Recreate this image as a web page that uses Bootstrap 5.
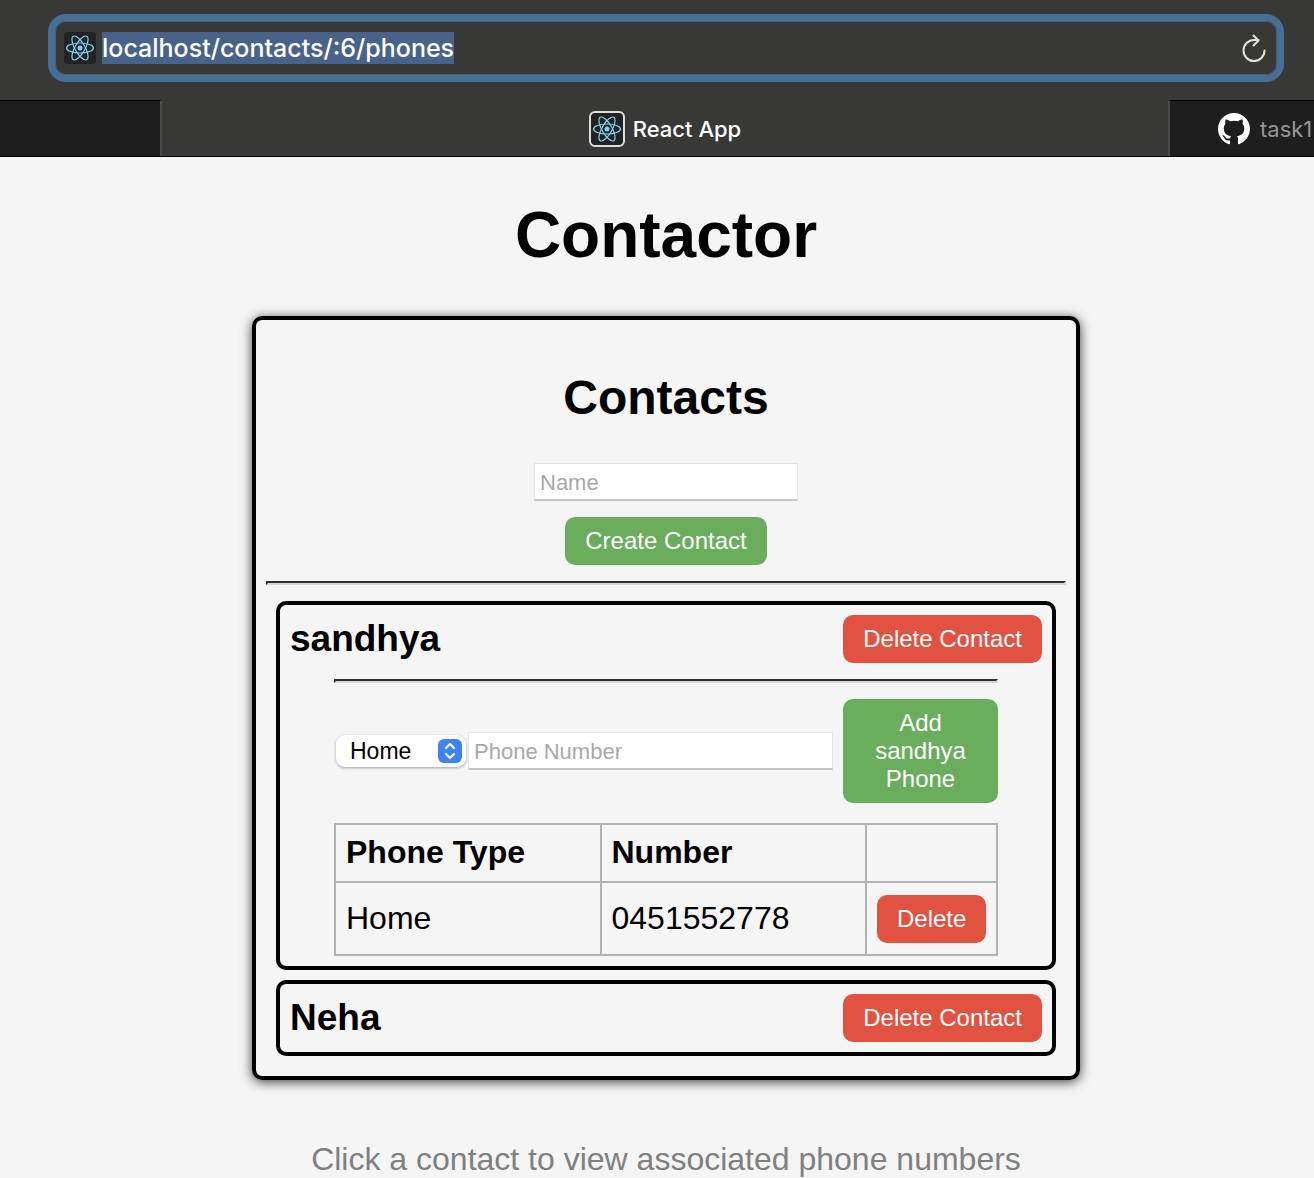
<!DOCTYPE html>
<html lang="en">
<head>
<meta charset="utf-8">
<meta name="viewport" content="width=device-width, initial-scale=1">
<title>React App</title>
<link href="https://cdn.jsdelivr.net/npm/bootstrap@5.3.0/dist/css/bootstrap.min.css" rel="stylesheet">
<style>
  body { font-family: "Liberation Sans", Arial, sans-serif; background: #f5f5f5; color: #000; font-size: 32px; line-height: 36px; overflow-x: hidden; }
  h1, h2, h3 { font-weight: 700; color: #000; }

  /* browser chrome */
  .chrome { background: #383836; font-family: Inter, "Open Sans", sans-serif; font-size: 22px; line-height: 32px; }
  .toolbar { padding: 14px 30px 18px 48px; }
  .address { height: 68px; border: 7px solid #466f98; border-radius: 18px; box-shadow: inset 0 0 0 1px #595957; padding: 0 9px; gap: 6px; }
  .address input { background: transparent; border: 0; outline: 0; color: #fff; font-size: 25px; font-weight: 500; line-height: 32px; height: 32px; padding: 0; min-width: 0; }
  .address input::selection { background: #48628a; color: #fff; }
  .reload { background: none; border: 0; padding: 0; width: 28px; height: 32px; }
  .tabs { height: 57px; border-bottom: 1px solid #000; }
  .tab-side { background: #1e1e1e; border-top: 1px solid #000; color: #969696; text-decoration: none; }
  .tab-first { width: 162px; border-right: 2px solid #4a4a49; }
  .tab-last { width: 146px; border-left: 2px solid #4a4a49; padding-left: 48px; gap: 10px; white-space: nowrap; overflow: hidden; }
  .tab-current { color: #fff; font-weight: 500; text-decoration: none; gap: 8px; padding-top: 2px; }

  /* application */
  .app { padding-left: 18px; }
  .app-title { font-size: 64px; line-height: 74px; margin: 41px 0 44px; }
  .panel { max-width: 828px; border: 4px solid #000; border-radius: 10px; padding: 10px 10px 20px; box-shadow: 0 2px 12px rgba(0,0,0,.75); }
  .panel-title { font-size: 48px; line-height: 55px; margin: 40px 0 38px; }
  .field { font-size: 22px; line-height: 26px; height: 38px; padding: 6px 4px 4px 5px; border: 1px solid #e6e6e6; border-bottom: 2px solid #c4c4c4; border-radius: 0; background: #fff; color: #000; min-width: 0; }
  .field::placeholder { color: #a9a9a9; opacity: 1; }
  .field-name { width: 264px; }
  .action { font-size: 24px; line-height: 28px; padding: 10px 20px; border: 0; border-radius: 10px; color: #fff; }
  .action-add { background: #69ad5d; }
  .action-remove { background: #e15241; }
  .rule { height: 4px; margin: 16px 0; opacity: 1; border: 2px solid; border-color: #2c302c #d4d6d4 #d4d6d4 #2c302c; }
  .people { gap: 10px; padding: 0 10px; }
  .person { border: 4px solid #000; border-radius: 10px; padding: 10px; }
  .person-name { font-size: 37px; line-height: 48px; }
  .phones { margin: 0 44px; }
  .kind { width: 130px; height: 32px; margin: 0 2px; }
  .kind select { display: block; appearance: none; width: 100%; height: 100%; border: 0; border-radius: 9px; background: #fff; color: #000; font-size: 23px; line-height: 32px; padding: 0 14px; box-shadow: 0 1px 3px rgba(0,0,0,.35); }
  .kind svg { right: 4px; top: 4px; pointer-events: none; }
  .add-phone { width: 155px; margin-left: 10px; }
  .phone-table { width: 100%; table-layout: fixed; border-collapse: collapse; margin: 20px 0 0; }
  .phone-table th, .phone-table td { border: 2px solid #b2b2b2; padding: 9px 10px 11px; }
  .phone-table th { height: 58px; }
  .phone-table td { height: 73px; }
  .phone-table .cell-action { padding: 10px; }
  .col-action { width: 131px; }
  .hint { color: #808080; margin: 61px 0 0; }
</style>
<script src="https://cdn.jsdelivr.net/npm/bootstrap@5.3.0/dist/js/bootstrap.bundle.min.js"></script>
</head>
<body>
<svg class="d-none" aria-hidden="true">
  <symbol id="atom" viewBox="0 0 32 32">
    <g fill="none" stroke="#7cd5f3" stroke-width="1.2">
      <ellipse cx="16" cy="16" rx="13.5" ry="5"/>
      <ellipse cx="16" cy="16" rx="13.5" ry="5" transform="rotate(60 16 16)"/>
      <ellipse cx="16" cy="16" rx="13.5" ry="5" transform="rotate(120 16 16)"/>
    </g>
    <circle cx="16" cy="16" r="2.5" fill="#7cd5f3"/>
  </symbol>
</svg>

<header class="chrome">
  <div class="toolbar">
    <form class="address d-flex align-items-center">
      <svg class="flex-shrink-0" width="32" height="32"><rect width="32" height="32" rx="4" fill="#222"/><use href="#atom" width="32" height="32"/></svg>
      <input id="url" class="flex-grow-1" type="text" aria-label="Address" value="localhost/contacts/:6/phones" spellcheck="false">
      <button class="reload d-flex" type="button" aria-label="Reload">
        <svg width="28" height="32" viewBox="0 0 28 32" fill="none" stroke="#e2e2e1" stroke-width="2" stroke-linecap="round" stroke-linejoin="round">
          <path d="M24.500 18.500A10.500 10.500 0 1 1 14 8H18.500M13.500 3.500L18.500 8.500L13.500 13.500"/>
        </svg>
      </button>
    </form>
  </div>
  <nav class="tabs d-flex" aria-label="Tabs">
    <div class="tab-side tab-first flex-shrink-0"></div>
    <a class="tab-current flex-grow-1 d-flex align-items-center justify-content-center" href="#">
      <svg width="36" height="36" viewBox="0 0 36 36"><rect x="1" y="1" width="34" height="34" rx="5" fill="#222" stroke="#dededd" stroke-width="2"/><use href="#atom" x="2" y="2" width="32" height="32"/></svg>
      React App
    </a>
    <a class="tab-side tab-last flex-shrink-0 d-flex align-items-center" href="#">
      <svg class="flex-shrink-0" width="32" height="32" viewBox="0 0 16 16" fill="#fff"><path d="M8 0C3.580 0 0 3.580 0 8c0 3.540 2.290 6.530 5.470 7.590.4.070.55-.17.55-.38 0-.19-.01-.82-.01-1.490-2.010.37-2.530-.49-2.690-.94-.09-.23-.48-.94-.82-1.130-.28-.15-.68-.52-.01-.53.63-.01 1.080.58 1.230.82.72 1.210 1.870.87 2.330.66.07-.52.28-.87.51-1.070-1.780-.2-3.640-.89-3.640-3.950 0-.87.31-1.590.82-2.150-.08-.2-.36-1.020.08-2.120 0 0 .67-.21 2.200.82.64-.18 1.320-.27 2-.27s1.360.09 2 .27c1.530-1.040 2.200-.82 2.200-.82.44 1.100.16 1.920.08 2.120.51.56.82 1.270.82 2.150 0 3.070-1.870 3.750-3.650 3.950.29.25.54.73.54 1.480 0 1.070-.01 1.930-.01 2.200 0 .21.15.46.55.38A8.010 8.010 0 0 0 16 8c0-4.420-3.580-8-8-8z"/></svg>
      <span>task1</span>
    </a>
  </nav>
</header>

<main class="app">
  <h1 class="app-title text-center">Contactor</h1>
  <section class="panel mx-auto">
    <h2 class="panel-title text-center">Contacts</h2>
    <form class="d-flex flex-column align-items-center gap-3">
      <input class="field field-name" type="text" placeholder="Name" aria-label="Name">
      <button class="action action-add" type="button">Create Contact</button>
    </form>
    <hr class="rule">
    <div class="people d-flex flex-column">
      <article class="person">
        <div class="d-flex justify-content-between">
          <h3 class="person-name mb-0">sandhya</h3>
          <button class="action action-remove" type="button">Delete Contact</button>
        </div>
        <div class="phones">
          <hr class="rule">
          <form class="d-flex align-items-center">
            <div class="kind position-relative flex-shrink-0">
              <select aria-label="Phone type"><option>Home</option><option>Work</option><option>Mobile</option></select>
              <svg class="position-absolute" width="24" height="24" viewBox="0 0 24 24" fill="none" stroke="#fff" stroke-width="2.200" stroke-linecap="round" stroke-linejoin="round">
                <rect width="24" height="24" rx="6" fill="#3e82f7" stroke="none"/>
                <path d="M8 9L12 5L16 9M8 15L12 19L16 15"/>
              </svg>
            </div>
            <input class="field flex-grow-1" type="text" placeholder="Phone Number" aria-label="Phone Number">
            <button class="action action-add add-phone flex-shrink-0" type="button">Add sandhya Phone</button>
          </form>
          <table class="phone-table">
            <colgroup><col><col><col class="col-action"></colgroup>
            <thead><tr><th>Phone Type</th><th>Number</th><th></th></tr></thead>
            <tbody><tr><td>Home</td><td>0451552778</td><td class="cell-action"><button class="action action-remove d-block" type="button">Delete</button></td></tr></tbody>
          </table>
        </div>
      </article>
      <article class="person">
        <div class="d-flex justify-content-between">
          <h3 class="person-name mb-0">Neha</h3>
          <button class="action action-remove" type="button">Delete Contact</button>
        </div>
      </article>
    </div>
  </section>
  <p class="hint text-center">Click a contact to view associated phone numbers</p>
</main>
<script>
  const url = document.getElementById('url');
  url.focus({ preventScroll: true });
  url.select();
</script>
</body>
</html>
